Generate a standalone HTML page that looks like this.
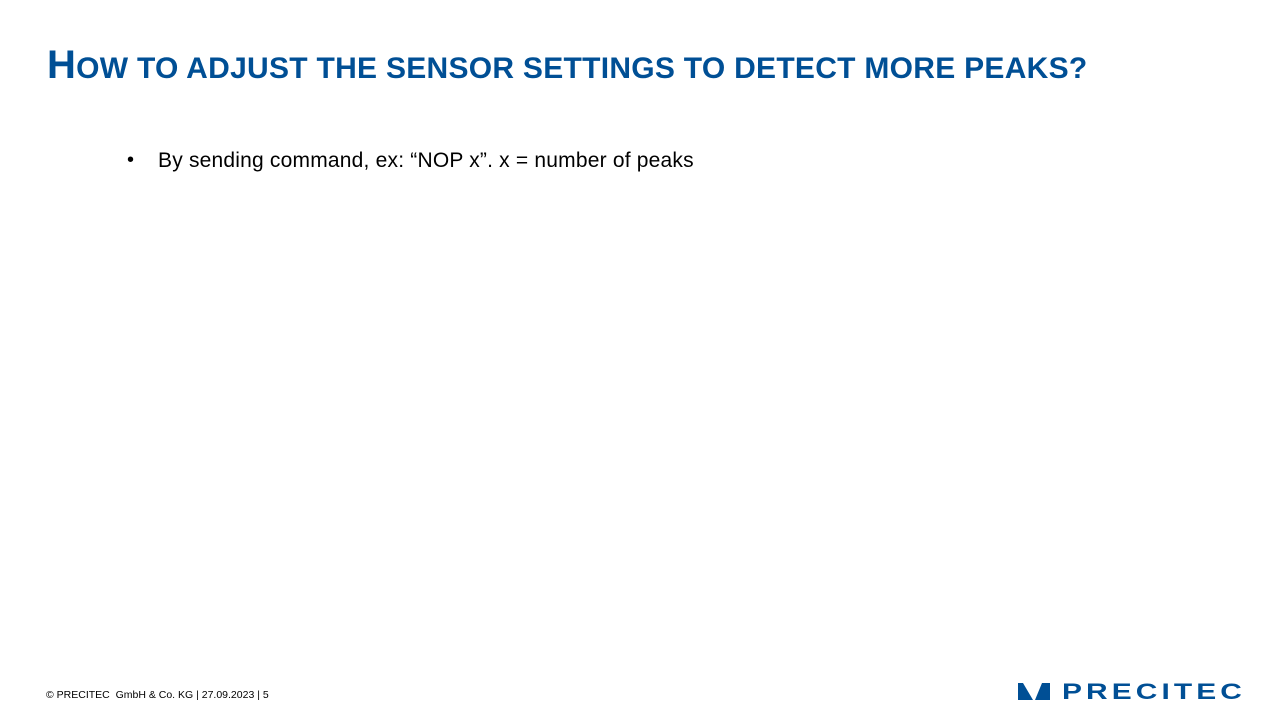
<!DOCTYPE html>
<html><head><meta charset="utf-8"><style>
body{margin:0;width:1280px;height:720px;background:#fff;position:relative;overflow:hidden;font-family:"Liberation Sans",sans-serif}
.t{position:absolute;left:47px;top:43px;color:#004f95;font-weight:bold;font-size:30px;white-space:nowrap;font-variant:small-caps;letter-spacing:0.28px}
.t b{font-size:40px}
.b{position:absolute;left:158px;top:149px;font-size:21px;color:#000;white-space:nowrap;letter-spacing:0.2px}
.dot{position:absolute;left:127px;top:149px;font-size:20px}
.f{position:absolute;left:46px;top:689px;font-size:10.5px;color:#000;white-space:nowrap;letter-spacing:0px}
.logo{position:absolute;left:1062px;top:679px;font-size:22px;font-weight:900;color:#004f95;letter-spacing:3px;white-space:nowrap;transform:scaleX(1.36);transform-origin:left}
</style></head><body>
<div class="t"><b>H</b>OW TO ADJUST THE SENSOR SETTINGS TO DETECT MORE PEAKS?</div>
<div class="dot">•</div>
<div class="b">By sending command, ex: “NOP x”. x = number of peaks</div>
<div class="f">© PRECITEC &nbsp;GmbH &amp; Co. KG | 27.09.2023 | 5</div>
<svg style="position:absolute;left:1018px;top:683px" width="32" height="17" viewBox="0 0 32 17"><path d="M0 0H5L15 17H0Z M24 0H32V17H17Z" fill="#004f95"/></svg>
<div class="logo">PRECITEC</div>
</body></html>
